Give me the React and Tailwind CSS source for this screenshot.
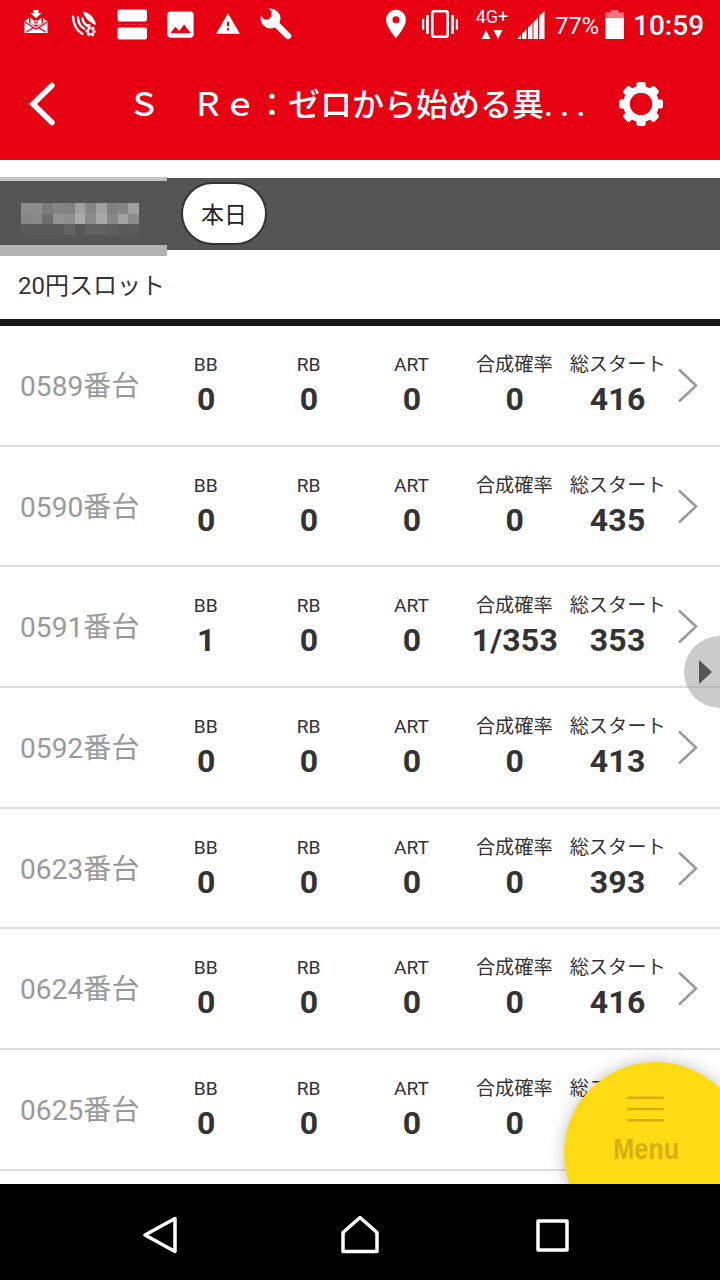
import clsx from 'clsx'
import { MdImage, MdLocationOn, MdWarning } from 'react-icons/md'

const MACHINES = [
  { id: '0589', bb: '0', rb: '0', art: '0', rate: '0', total: '416' },
  { id: '0590', bb: '0', rb: '0', art: '0', rate: '0', total: '435' },
  { id: '0591', bb: '1', rb: '0', art: '0', rate: '1/353', total: '353' },
  { id: '0592', bb: '0', rb: '0', art: '0', rate: '0', total: '413' },
  { id: '0623', bb: '0', rb: '0', art: '0', rate: '0', total: '393' },
  { id: '0624', bb: '0', rb: '0', art: '0', rate: '0', total: '416' },
  { id: '0625', bb: '0', rb: '0', art: '0', rate: '0', total: '' },
]

const COLUMNS = [
  { key: 'bb', label: 'BB' },
  { key: 'rb', label: 'RB' },
  { key: 'art', label: 'ART' },
  { key: 'rate', label: '合成確率' },
  { key: 'total', label: '総スタート' },
]

// masked store name in the first tab
const MOSAIC = [
  '#8c8c8c', '#8c8c8c', '#7a7a7a', '#858585', '#828282', '#a0a0a0', '#858585', '#a0a0a0', '#808080', '#858585', '#a0a0a0',
  '#868686', '#8a8a8a', '#6e6e6e', '#929292', '#8e8e8e', '#aaaaaa', '#8c8c8c', '#a8a8a8', '#868686', '#a2a2a2', '#8c8c8c',
  '#595959', '#585858', '#585858', '#595959', '#636363', '#565656', '#606060', '#606060', '#5e5e5e', '#595959', '#5a5a5a',
]

function MailIcon() {
  return (
    <svg className="-mt-1 ml-6 h-6 w-6" viewBox="0 0 24 24" fill="white">
      <path d="M0.500 11.500 5 8v5l7 4 7-4V8l4.500 3.500V23H.500z" />
      <path d="M9.500 0h5v3H18l-6 5-6-5h3.500z" />
      <path d="M6.500 7.500 10.500 11v4.500l-4-2zM17.500 7.500 13.500 11v4.500l4-2zM11.200 10h1.600v2h-1.600zM11.200 13h1.600v2h-1.600z" />
      <path d="M1 12l9 6M23 12l-9 6M2.500 22 9.500 17.500 12 19l2.500-1.500L21.500 22" fill="none" stroke="#e60012" strokeWidth="1.300" />
    </svg>
  )
}

function DishIcon() {
  return (
    <svg className="ml-[23px] h-[26px] w-[26px]" viewBox="0 0 26 26" fill="none" stroke="white">
      <path d="M2 5.500C2.500 13.500 5.500 19.500 11.500 23" strokeWidth="2.400" strokeLinecap="round" />
      <path d="M7 6.500c.300 5 2.300 9 6 11" strokeWidth="2.400" strokeLinecap="round" />
      <path d="M11.500 7.500C12 11 13.300 13 16 14.500h2.500" strokeWidth="2.400" strokeLinecap="round" />
      <path d="M12 .500c6.500 1 12 6.500 13 13.500C20 13 13 6.500 12 .500z" fill="white" stroke="none" />
      <circle cx="19.700" cy="20.300" r="3" strokeWidth="2" />
      <circle cx="19.700" cy="20.300" r="4.500" strokeWidth="1.800" strokeDasharray="2.500 2.212" strokeDashoffset="1.300" />
    </svg>
  )
}

function StackIcon() {
  return (
    <svg className="ml-[20px] h-[31px] w-[31px]" viewBox="0 0 31 31" fill="white">
      <rect x="0.500" y="0.500" width="29.500" height="12" rx="2" />
      <rect x="0.500" y="18.500" width="29.500" height="12" rx="2" />
      <path d="M0 15.500h31" stroke="#ff6670" strokeWidth="0.800" strokeDasharray="5 2" opacity="0.600" />
    </svg>
  )
}

function WrenchIcon() {
  return (
    <svg className="ml-[19px] size-[32px]" viewBox="0 0 32 32">
      <circle cx="10.500" cy="10.500" r="10" fill="white" />
      <path d="M13 13l15 15" stroke="white" strokeWidth="6.500" strokeLinecap="round" />
      <path d="M-2 3 5 -3l6.500 6.500v4.700L8.200 11.500H4z" fill="#e60012" />
    </svg>
  )
}

function VibrateIcon() {
  return (
    <svg className="ml-[9px] h-7 w-9" viewBox="0 0 36 28" fill="white">
      <rect x="10.300" y="1.300" width="15.400" height="25.400" rx="2" fill="none" stroke="white" strokeWidth="2.600" />
      <path d="M4 5h2.800v19H4zM0 9h2.200v11H0zM29.200 5H32v19h-2.800zM33.800 9H36v11h-2.200z" />
    </svg>
  )
}

function SignalIcon() {
  return (
    <svg className="mt-[2px] ml-[8px] h-7 w-7" viewBox="0 0 28 28" fill="white">
      <path d="M0 28l4-4V28zM5 28v-5.500l4.500-4.500V28zM11 28V16.500l4.500-4.500V28zM16.500 28V11l4.500-4.500V28zM22 28V5l5.500-5v28z" />
    </svg>
  )
}

function BatteryIcon() {
  return (
    <svg className="ml-[5px] h-[29px] w-5" viewBox="0 0 20 29">
      <path d="M5.500 0h8v2.500H19V8H.500V2.500h5z" fill="#f4747d" />
      <path d="M.500 8H19v21H.500z" fill="white" />
    </svg>
  )
}

function StatusBar() {
  return (
    <div className="flex h-12 items-center whitespace-nowrap text-white">
      <MailIcon />
      <DishIcon />
      <StackIcon />
      <MdImage className="ml-[15px] size-[35px]" />
      <MdWarning className="ml-[17px] size-[26px]" />
      <WrenchIcon />
      <MdLocationOn className="ml-[87px] size-[34px]" />
      <VibrateIcon />
      <div className="-mt-[2px] ml-[17px] flex w-[34px] flex-col items-center">
        <span className="text-[18px] leading-[17px]">4G+</span>
        <svg className="mt-[5px] h-[9px] w-[22px]" viewBox="0 0 22 9" fill="white">
          <path d="M5 0l4.500 9h-9zM12.500 0h9L17 9z" />
        </svg>
      </div>
      <SignalIcon />
      <span className="mt-[3px] ml-[10px] w-[45px] text-[24px] leading-none tracking-[-0.3px]">77%</span>
      <BatteryIcon />
      <span className="mt-[3px] ml-[8px] text-[28px] leading-none font-medium">10:59</span>
    </div>
  )
}

function GearIcon() {
  return (
    <svg className="h-11 w-11" viewBox="-22 -22 44 44">
      <circle r="14.500" fill="none" stroke="white" strokeWidth="7" />
      {[0, 45, 90, 135, 180, 225, 270, 315].map((deg) => (
        <rect key={deg} x="-4.600" y="-22" width="9.200" height="9" rx="2" fill="white" transform={`rotate(${deg})`} />
      ))}
      <circle r="11" fill="#e60012" />
    </svg>
  )
}

function TitleBar() {
  return (
    <div className="flex h-28 items-center text-white">
      <svg className="ml-[29px] h-11 w-7" viewBox="0 0 28 44" fill="none" stroke="white" strokeWidth="5.500" strokeLinecap="round">
        <path d="M23 3.500 4 22l19 18.500" />
      </svg>
      <h1 className="mt-[2px] ml-[71px] w-[491px] text-[32px] leading-none font-medium whitespace-nowrap">
        Ｓ　Ｒｅ：ゼロから始める異<span className="tracking-[7.300px]">...</span>
      </h1>
      <GearIcon />
    </div>
  )
}

function DayTabs() {
  return (
    <div className="mt-[18px] flex h-[72px] items-start bg-[#555555]">
      <div className="-mt-px h-[79px] w-[167px] border-t-4 border-b-11 border-t-[#c4c4c4] border-b-[#b3b3b3] bg-[#555555] pt-[22px] pl-[21px]">
        <div className="grid h-8 w-[118px] grid-cols-11">
          {MOSAIC.map((color, i) => (
            <span key={i} style={{ backgroundColor: color }} />
          ))}
        </div>
      </div>
      <button className="mt-[4px] ml-[14px] h-[63px] w-[86px] rounded-full border-2 border-[#333333] bg-white pt-[3px] text-[23px] leading-none text-[#222222]">
        本日
      </button>
    </div>
  )
}

function MachineRow({ machine }) {
  return (
    <div className="flex h-[120.67px] flex-none items-start border-b-2 border-[#dddddd]">
      <span className="mt-[43px] w-[154.3px] flex-none pl-5 text-[28px] leading-[36px] tracking-[0.1px] text-[#999999]">{machine.id}番台</span>
      {COLUMNS.map(({ key, label }) => (
        <div key={key} className="mt-[26px] flex w-[102.86px] flex-none flex-col items-center whitespace-nowrap text-[#333333]">
          <span className={clsx('text-[19.2px] leading-[26px]', key === 'total' && 'pl-px')}>{label}</span>
          <span className="pl-px text-[32px] leading-[42px] font-bold tracking-[0.2px]">{machine[key]}</span>
        </div>
      ))}
      <svg className="mt-[42px] ml-[9px] h-[35px] w-5" viewBox="0 0 20 35" fill="none" stroke="#999999" strokeWidth="2.500">
        <path d="M1 1.500 18 17.500 1 33.500" />
      </svg>
    </div>
  )
}

function SideHandle() {
  return (
    <div className="absolute top-[636px] -right-9 flex size-[72px] items-center rounded-full bg-[#a0a0a0]/55 pl-[15px]">
      <svg className="h-6 w-[13px]" viewBox="0 0 13 24" fill="#555555">
        <path d="M0 0l13 12L0 24z" />
      </svg>
    </div>
  )
}

function MenuButton() {
  return (
    <button className="absolute top-[1062px] left-[564px] flex size-[183px] flex-col items-center rounded-full bg-[#ffdb14] pt-[34px] pr-5 text-[#d8af10] shadow-[0_0_16px_rgba(0,0,0,0.25)]">
      <svg className="h-[26px] w-[37px]" viewBox="0 0 37 26" stroke="currentColor" strokeWidth="2.500">
        <path d="M0 1.800h37M0 13h37M0 24.200h37" />
      </svg>
      <span className="mt-[9px] ml-[2px] scale-x-[0.84] font-['Liberation_Sans',sans-serif] text-[30px] leading-[36px] font-bold">Menu</span>
    </button>
  )
}

function NavBar() {
  return (
    <nav className="relative z-10 flex h-24 flex-none items-center bg-black pt-2">
      <svg className="ml-[142px] h-10 w-9" viewBox="0 0 36 40" fill="none" stroke="white" strokeWidth="3.500" strokeLinejoin="round">
        <path d="M33 2.500v33L3 19z" />
      </svg>
      <svg className="ml-[162px] h-10 w-10" viewBox="0 0 40 40" fill="none" stroke="white" strokeWidth="3.500" strokeLinejoin="round">
        <path d="M20 1.500 37 16.500v19H3v-19z" />
      </svg>
      <svg className="ml-[156px] h-[34px] w-[34px]" viewBox="0 0 34 34" fill="none" stroke="white" strokeWidth="3.500" strokeLinejoin="round">
        <path d="M2 2h29v29H2z" />
      </svg>
    </nav>
  )
}

export default function App() {
  return (
    <div className="relative flex h-[1280px] w-[720px] flex-col overflow-hidden bg-white font-['Roboto','Noto_Sans_CJK_JP',sans-serif]">
      <header className="h-40 flex-none bg-[#e60012]">
        <StatusBar />
        <TitleBar />
      </header>
      <main className="flex min-h-0 flex-1 flex-col overflow-hidden">
        <div className="flex-none">
          <DayTabs />
        </div>
        <h2 className="flex h-[76px] flex-none items-center border-b-7 border-[#1a1a1a] pt-[2px] pl-[18px] text-[24px] leading-none text-[#333333]">
          20円スロット
        </h2>
        {MACHINES.map((machine) => (
          <MachineRow key={machine.id} machine={machine} />
        ))}
      </main>
      <SideHandle />
      <MenuButton />
      <NavBar />
    </div>
  )
}
